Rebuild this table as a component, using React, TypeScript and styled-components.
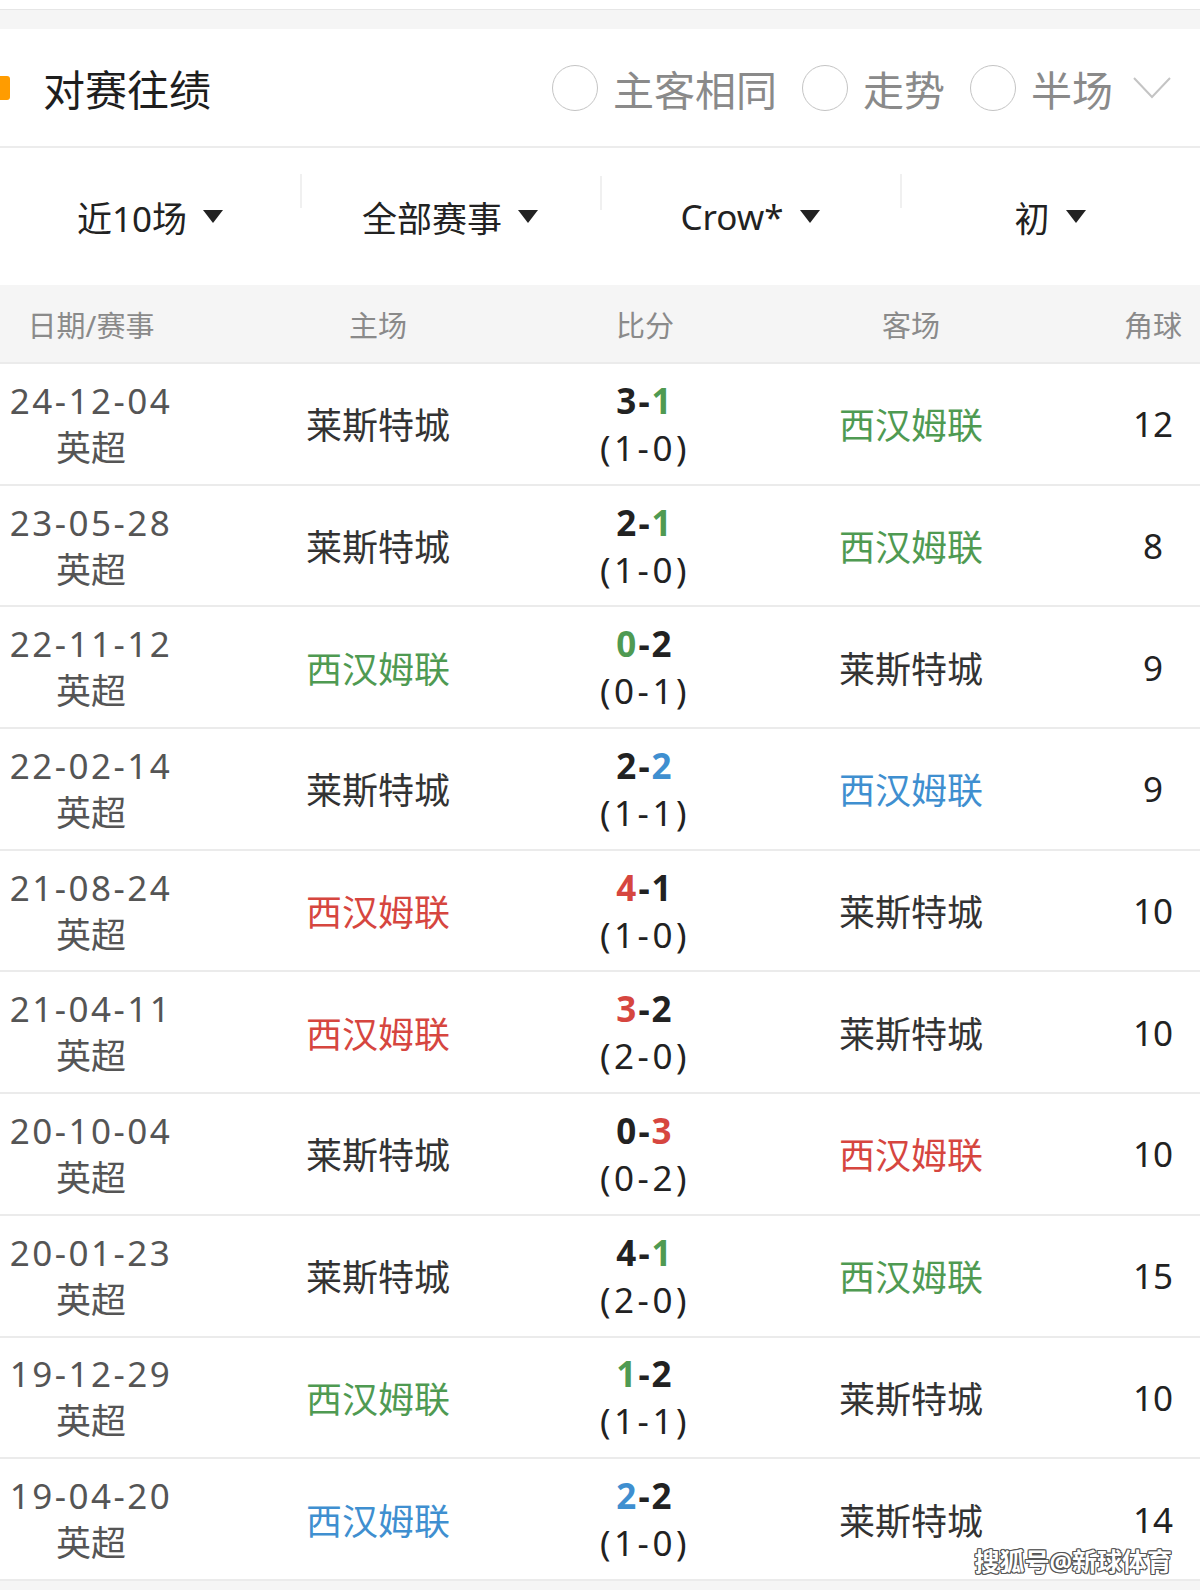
import styled, { createGlobalStyle } from "styled-components";

const GlobalStyle = createGlobalStyle`
    html, body {
        margin: 0;
        padding: 0;
        background: #ffffff;
        font-family: "Noto Sans", "Noto Sans CJK SC", sans-serif;
    }
`;

const Page = styled.div`
    position: relative;
    width: 1200px;
    height: 1590px;
    overflow: hidden;
    background: #f5f5f5;
`;

const TopStrip = styled.div`
    height: 9px;
    background: #ffffff;
    border-bottom: 1px solid #e6e6e6;
`;

const Spacer = styled.div`
    height: 19px;
    background: #f5f5f5;
`;

const SectionHeader = styled.header`
    height: 117px;
    display: flex;
    align-items: center;
    background: #ffffff;
    border-bottom: 2px solid #ececec;
    padding-right: 28px;
`;

const Marker = styled.span`
    width: 12px;
    height: 24px;
    margin-left: -2px;
    border-radius: 3px;
    background: #ff9c00;
`;

const Title = styled.h1`
    margin: 0 0 0 33px;
    font-size: 42px;
    font-weight: 400;
    color: #1e1e1e;
    flex: 1;
`;

const Options = styled.div`
    display: flex;
    align-items: center;
    gap: 25px;
`;

const Option = styled.label`
    display: flex;
    align-items: center;
    gap: 15px;
    font-size: 41px;
    color: #8a8a8a;
`;

const Radio = styled.span`
    width: 46px;
    height: 46px;
    box-sizing: border-box;
    border-radius: 50%;
    border: 1.5px solid #c4c4c4;
`;

const Chevron = styled.svg`
    width: 40px;
    height: 24px;
    margin-left: -6px;
`;

const FilterBar = styled.div`
    height: 137px;
    display: grid;
    grid-template-columns: repeat(4, 1fr);
    align-items: center;
    background: #ffffff;
`;

const Filter = styled.div<{ $first?: boolean }>`
    position: relative;
    display: flex;
    justify-content: center;
    align-items: center;
    gap: 16px;
    font-size: 35px;
    color: #222;

    &::before {
        content: "";
        display: ${p => (p.$first ? "none" : "block")};
        position: absolute;
        left: 0;
        top: -17px;
        width: 1.5px;
        height: 34px;
        background: #f0f0f0;
    }
`;

const Caret = styled.svg`
    width: 20px;
    height: 13px;
`;

const Grid = styled.div`
    display: grid;
    grid-template-columns: 182px 392px 142px 390px 94px;
`;

const TableHead = styled(Grid)`
    height: 77px;
    align-items: center;
    background: #f5f5f5;
    font-size: 29px;
    color: #8a8a8a;
    text-align: center;
`;

const Rows = styled.div`
    background: #ffffff;
    border-bottom: 2px solid #ebebeb;
`;

const Row = styled(Grid)`
    height: 121.7px;
    box-sizing: border-box;
    align-items: center;
    border-top: 2px solid #ebebeb;
    text-align: center;
`;

const DateCell = styled.div`
    font-size: 35px;
    line-height: 47px;
    color: #555;
    letter-spacing: 2.5px;
`;

const League = styled.div`
    letter-spacing: 0;
`;

const Team = styled.div<{ $color: string }>`
    font-size: 36px;
    color: ${p => p.$color};
`;

const ScoreCell = styled.div`
    font-size: 35px;
    line-height: 47px;
    color: #222;
    letter-spacing: 3.5px;
`;

const FullTime = styled.div`
    font-weight: 700;
    letter-spacing: 2px;
`;

const Goal = styled.span<{ $color?: string }>`
    color: ${p => p.$color || "#222"};
`;

const Corner = styled.div`
    font-size: 35px;
    color: #222;
`;

const Watermark = styled.div`
    position: absolute;
    right: 28px;
    bottom: 12px;
    font-size: 25px;
    font-weight: 700;
    color: #ffffff;
    text-shadow:
        1px 1px 0 #555, -1px -1px 0 #555, 1px -1px 0 #555, -1px 1px 0 #555,
        0 1px 0 #555, 0 -1px 0 #555, 1px 0 0 #555, -1px 0 0 #555;
`;

const COLORS = {
    lose: "#4f9a52",
    draw: "#3f8fd0",
    win: "#d6463f",
    plain: "#333333",
};

type Result = "lose" | "draw" | "win";

interface IMatch {
    date: string;
    whuHome: boolean;
    home: number;
    away: number;
    half: string;
    result: Result;
    corners: number;
}

const matches: IMatch[] = [
    { date: "24-12-04", whuHome: false, home: 3, away: 1, half: "(1-0)", result: "lose", corners: 12 },
    { date: "23-05-28", whuHome: false, home: 2, away: 1, half: "(1-0)", result: "lose", corners: 8 },
    { date: "22-11-12", whuHome: true, home: 0, away: 2, half: "(0-1)", result: "lose", corners: 9 },
    { date: "22-02-14", whuHome: false, home: 2, away: 2, half: "(1-1)", result: "draw", corners: 9 },
    { date: "21-08-24", whuHome: true, home: 4, away: 1, half: "(1-0)", result: "win", corners: 10 },
    { date: "21-04-11", whuHome: true, home: 3, away: 2, half: "(2-0)", result: "win", corners: 10 },
    { date: "20-10-04", whuHome: false, home: 0, away: 3, half: "(0-2)", result: "win", corners: 10 },
    { date: "20-01-23", whuHome: false, home: 4, away: 1, half: "(2-0)", result: "lose", corners: 15 },
    { date: "19-12-29", whuHome: true, home: 1, away: 2, half: "(1-1)", result: "lose", corners: 10 },
    { date: "19-04-20", whuHome: true, home: 2, away: 2, half: "(1-0)", result: "draw", corners: 14 },
];

const LEI = "莱斯特城";
const WHU = "西汉姆联";

function App() {
    return (
        <Page>
            <GlobalStyle />
            <TopStrip />
            <Spacer />
            <SectionHeader>
                <Marker />
                <Title>对赛往绩</Title>
                <Options>
                    <Option><Radio />主客相同</Option>
                    <Option><Radio />走势</Option>
                    <Option><Radio />半场</Option>
                    <Chevron viewBox="0 0 40 24">
                        <polyline points="2,2 20,21 38,2" fill="none" stroke="#c4c4c4" strokeWidth="2" />
                    </Chevron>
                </Options>
            </SectionHeader>
            <FilterBar>
                {["近10场", "全部赛事", "Crow*", "初"].map((label, i) => (
                    <Filter key={label} $first={i === 0}>
                        {label}
                        <Caret viewBox="0 0 20 13">
                            <polygon points="0,0 20,0 10,13" fill="#222" />
                        </Caret>
                    </Filter>
                ))}
            </FilterBar>
            <TableHead>
                <div>日期/赛事</div>
                <div>主场</div>
                <div>比分</div>
                <div>客场</div>
                <div>角球</div>
            </TableHead>
            <Rows>
                {matches.map(m => {
                    const tint = COLORS[m.result];
                    return (
                        <Row key={m.date}>
                            <DateCell>
                                {m.date}
                                <League>英超</League>
                            </DateCell>
                            <Team $color={m.whuHome ? tint : COLORS.plain}>{m.whuHome ? WHU : LEI}</Team>
                            <ScoreCell>
                                <FullTime>
                                    <Goal $color={m.whuHome ? tint : undefined}>{m.home}</Goal>-
                                    <Goal $color={m.whuHome ? undefined : tint}>{m.away}</Goal>
                                </FullTime>
                                {m.half}
                            </ScoreCell>
                            <Team $color={m.whuHome ? COLORS.plain : tint}>{m.whuHome ? LEI : WHU}</Team>
                            <Corner>{m.corners}</Corner>
                        </Row>
                    );
                })}
            </Rows>
            <Watermark>搜狐号@新球体育</Watermark>
        </Page>
    );
}

export default App;
